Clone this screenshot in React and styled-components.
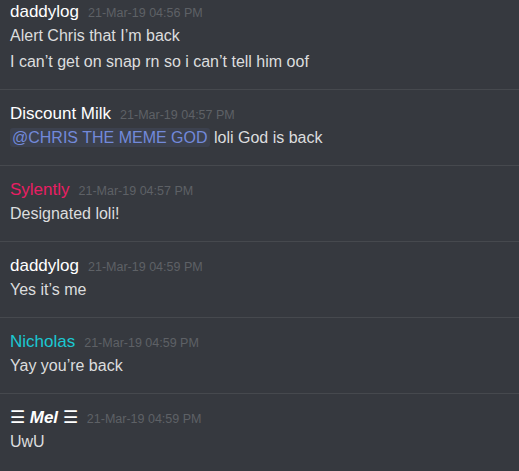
import React from "react";
import styled, { createGlobalStyle } from "styled-components";

const GlobalStyle = createGlobalStyle`
  html, body {
    margin: 0;
    padding: 0;
    background: #36393f;
  }
  body {
    font-family: "Liberation Sans", Arial, sans-serif;
  }
`;

const messages = [
  {
    name: "daddylog",
    time: "21-Mar-19 04:56 PM",
    lines: [["Alert Chris that I’m back"], ["I can’t get on snap rn so i can’t tell him oof"]],
  },
  {
    name: "Discount Milk",
    time: "21-Mar-19 04:57 PM",
    lines: [[{ mention: "@CHRIS THE MEME GOD" }, " loli God is back"]],
  },
  {
    name: "Sylently",
    color: "#e91e63",
    time: "21-Mar-19 04:57 PM",
    lines: [["Designated loli!"]],
  },
  {
    name: "daddylog",
    time: "21-Mar-19 04:59 PM",
    lines: [["Yes it’s me"]],
  },
  {
    name: "Nicholas",
    color: "#1bc8d2",
    time: "21-Mar-19 04:59 PM",
    lines: [["Yay you’re back"]],
  },
  {
    name: "mel",
    time: "21-Mar-19 04:59 PM",
    lines: [["UwU"]],
  },
];

function App() {
  return (
    <>
      <GlobalStyle />
      <Chat>
        {messages.map((msg, i) => (
          <Group key={i} $first={i === 0}>
            <Header>
              <Username $color={msg.color}>
                {msg.name === "mel" ? (
                  <>
                    ☰ <Fancy>Mel</Fancy> ☰
                  </>
                ) : (
                  msg.name
                )}
              </Username>
              <Timestamp>{msg.time}</Timestamp>
            </Header>
            {msg.lines.map((parts, j) => (
              <Line key={j} $follow={j > 0}>
                {parts.map((p, k) =>
                  typeof p === "string" ? (
                    <React.Fragment key={k}>{p}</React.Fragment>
                  ) : (
                    <Mention key={k}>{p.mention}</Mention>
                  )
                )}
              </Line>
            ))}
          </Group>
        ))}
      </Chat>
    </>
  );
}
export default App;

const Chat = styled.div`
  width: 519px;
  height: 471px;
  overflow: hidden;
  background: #36393f;
  display: flex;
  flex-direction: column;
`;

const Group = styled.div`
  padding: ${(p) => (p.$first ? "1px" : "13px")} 10px 16px;
  border-top: ${(p) => (p.$first ? "none" : "1px solid #46494e")};
`;

const Header = styled.div`
  display: flex;
  align-items: baseline;
  gap: 9px;
  height: 22px;
  line-height: 22px;
`;

const Username = styled.span`
  font-size: 17px;
  color: ${(p) => p.$color || "#ffffff"};
  white-space: nowrap;
`;

const Fancy = styled.b`
  font-style: italic;
  font-weight: 700;
`;

const Timestamp = styled.span`
  font-size: 12.5px;
  color: #5e6166;
`;

const Line = styled.div`
  margin-top: ${(p) => (p.$follow ? "4px" : "2px")};
  font-size: 16px;
  line-height: 22px;
  color: #dcddde;
  white-space: nowrap;
`;

const Mention = styled.span`
  color: #7289da;
  background: rgba(114, 137, 218, 0.1);
  padding: 1px 2px;
  border-radius: 3px;
`;
